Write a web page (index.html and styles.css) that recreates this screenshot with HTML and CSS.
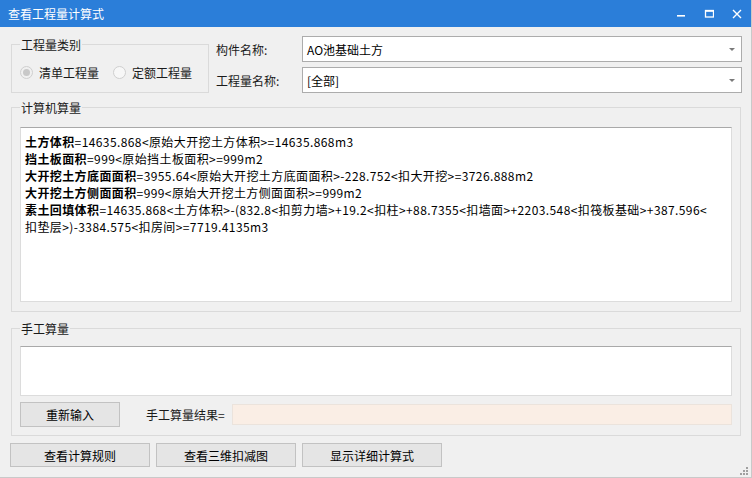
FILE: index.html
```html
<!DOCTYPE html>
<html lang="zh">
<head>
<meta charset="utf-8">
<title>查看工程量计算式</title>
<link rel="stylesheet" href="styles.css">
</head>
<body>
<div class="window">
  <div class="titlebar">
    <span class="title">查看工程量计算式</span>
    <div class="controls">
      <span class="ctl"><svg width="10" height="10" viewBox="0 0 10 10"><rect x="1" y="6" width="8" height="1.6" fill="#fff"/></svg></span>
      <span class="ctl"><svg width="10" height="10" viewBox="0 0 10 10"><rect x="1.5" y="1.5" width="8" height="6.5" fill="none" stroke="#fff" stroke-width="1.3"/><rect x="1.5" y="1.5" width="8" height="1.3" fill="#fff"/></svg></span>
      <span class="ctl"><svg width="10" height="10" viewBox="0 0 10 10"><path d="M1 1 L9 9 M9 1 L1 9" stroke="#fff" stroke-width="1.4"/></svg></span>
    </div>
  </div>
  <div class="content">
    <div class="top">
      <fieldset class="group type-group">
        <legend>工程量类别</legend>
        <div class="radios">
          <span class="radio checked"></span><span class="radio-label">清单工程量</span>
          <span class="radio"></span><span class="radio-label">定额工程量</span>
        </div>
      </fieldset>
      <div class="fields">
        <div class="field">
          <span class="field-label">构件名称:</span>
          <div class="combo"><span class="combo-text">AO池基础土方</span><span class="arrow"></span></div>
        </div>
        <div class="field">
          <span class="field-label">工程量名称:</span>
          <div class="combo"><span class="combo-text">[全部]</span><span class="arrow"></span></div>
        </div>
      </div>
    </div>
    <fieldset class="group calc-group">
      <legend>计算机算量</legend>
      <div class="textbox calc-text">
        <div><b>土方体积</b>=14635.868&lt;原始大开挖土方体积&gt;=14635.868m3</div>
        <div><b>挡土板面积</b>=999&lt;原始挡土板面积&gt;=999m2</div>
        <div><b>大开挖土方底面面积</b>=3955.64&lt;原始大开挖土方底面面积&gt;-228.752&lt;扣大开挖&gt;=3726.888m2</div>
        <div><b>大开挖土方侧面面积</b>=999&lt;原始大开挖土方侧面面积&gt;=999m2</div>
        <div><b>素土回填体积</b>=14635.868&lt;土方体积&gt;-(832.8&lt;扣剪力墙&gt;+19.2&lt;扣柱&gt;+88.7355&lt;扣墙面&gt;+2203.548&lt;扣筏板基础&gt;+387.596&lt;<br>扣垫层&gt;)-3384.575&lt;扣房间&gt;=7719.4135m3</div>
      </div>
    </fieldset>
    <fieldset class="group manual-group">
      <legend>手工算量</legend>
      <div class="textbox manual-text"></div>
      <div class="manual-row">
        <button class="btn small-btn">重新输入</button>
        <span class="result-label">手工算量结果=</span>
        <div class="result"></div>
      </div>
    </fieldset>
    <div class="bottom">
      <button class="btn big-btn">查看计算规则</button>
      <button class="btn big-btn">查看三维扣减图</button>
      <button class="btn big-btn">显示详细计算式</button>
    </div>
  </div>
  <div class="grip">
    <svg width="8" height="8" viewBox="0 0 8 8"><g fill="#a0a0a0"><rect x="6" y="0" width="2" height="2"/><rect x="3" y="3" width="2" height="2"/><rect x="6" y="3" width="2" height="2"/><rect x="0" y="6" width="2" height="2"/><rect x="3" y="6" width="2" height="2"/><rect x="6" y="6" width="2" height="2"/></g></svg>
  </div>
</div>
</body>
</html>
```

FILE: styles.css
```css
* { box-sizing: border-box; }
html, body { margin: 0; padding: 0; }
body {
  width: 752px;
  height: 478px;
  overflow: hidden;
  background: #f0f0f0;
  font-family: "Noto Sans CJK SC", "Microsoft YaHei", sans-serif;
  font-size: 12px;
  color: #1a1a1a;
}
.window {
  position: relative;
  width: 752px;
  height: 478px;
  display: flex;
  flex-direction: column;
  background: #f0f0f0;
  border-right: 1px solid #c9c9c9;
  border-bottom: 1px solid #c9c9c9;
}
.titlebar {
  height: 27px;
  flex: none;
  background: #2b7ed9;
  color: #fff;
  display: flex;
  align-items: center;
  padding-left: 8px;
}
.title { line-height: 17px; }
.controls { margin-left: auto; display: flex; height: 27px; }
.ctl { width: 28px; display: flex; align-items: center; justify-content: center; }
.content { padding-left: 11px; display: flex; flex-direction: column; }
.top { height: 72px; padding-top: 9px; display: flex; align-items: flex-start; }
.group {
  margin: 0;
  min-width: 0;
  border: 1px solid #dadada;
  padding: 0 8px;
}
.group legend {
  padding: 0 1px;
  line-height: 17px;
  height: 17px;
}
.type-group { width: 198px; height: 57px; flex: none; }
.radios { display: flex; align-items: center; height: 17px; margin-top: 11px; white-space: nowrap; }
.radio {
  flex: none;
  width: 13px; height: 13px; border-radius: 50%;
  border: 1px solid #cfcfcf; background: #f7f7f7;
  display: flex; align-items: center; justify-content: center;
}
.radio.checked { background: #f0f0f0; }
.radio.checked::after {
  content: ""; width: 7px; height: 7px; border-radius: 50%; background: #c8c8c8;
}
.radio-label { flex: none; margin-left: 6px; margin-right: 14px; line-height: 17px; }
.radio-label:last-child { margin-right: 0; }
.fields { margin-left: 7px; display: flex; flex-direction: column; gap: 5px; }
.field { display: flex; align-items: center; }
.field-label { width: 86px; flex: none; line-height: 17px; white-space: nowrap; }
.combo {
  width: 440px; height: 26px; flex: none;
  background: #fff; border: 1px solid #acacac;
  display: flex; align-items: center; padding-left: 4px; padding-right: 6px;
}
.combo-text { flex: 1; line-height: 17px; color: #000; }
.arrow {
  width: 0; height: 0;
  border-left: 3px solid transparent; border-right: 3px solid transparent;
  border-top: 3px solid #7a7a7a;
}
.calc-group { width: 730px; padding-top: 11px; padding-bottom: 9px; }
.textbox {
  background: #fff;
  border: 1px solid #dcdcdc;
  border-top-color: #a9a9a9;
}
.calc-text { height: 175px; padding: 5px 4px; line-height: 17px; color: #000; letter-spacing: 0.4px; white-space: nowrap; }
.calc-text b { font-weight: bold; }
.manual-group { width: 730px; margin-top: 8px; padding-top: 9px; padding-bottom: 8px; }
.manual-text { height: 50px; }
.manual-row { display: flex; align-items: center; margin-top: 6px; }
.btn {
  font-family: inherit; font-size: 12px; color: #000;
  background: #e5e5e5; border: 1px solid #c2c2c2;
  padding: 0; line-height: 17px;
}
.small-btn { width: 100px; height: 25px; }
.result-label { margin-left: 26px; width: 86px; line-height: 17px; white-space: nowrap; }
.result { width: 500px; height: 21px; background: #faeee5; border: 1px solid #ebe3dc; }
.bottom { display: flex; gap: 6px; margin-top: 7px; margin-left: -1px; }
.big-btn { width: 140px; height: 24px; }
.grip { position: absolute; right: 3px; bottom: 2px; width: 8px; height: 8px; }
.grip svg { display: block; }
```
